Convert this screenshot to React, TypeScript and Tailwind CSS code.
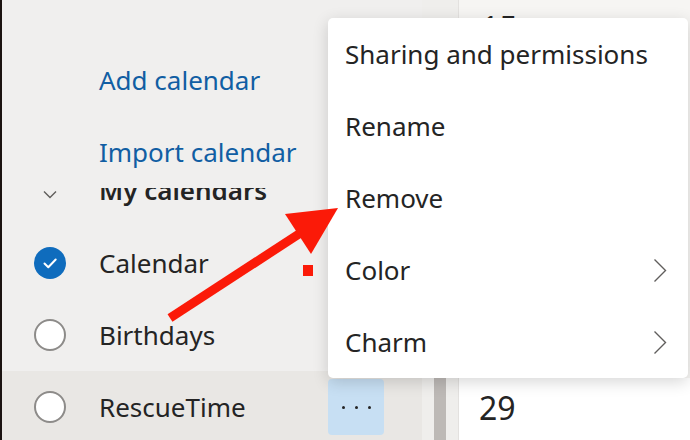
import React from "react";

interface CalendarRow {
  label: string;
  checked: boolean;
  active?: boolean;
}

const calendars: CalendarRow[] = [
  { label: "Calendar", checked: true },
  { label: "Birthdays", checked: false },
  { label: "RescueTime", checked: false, active: true },
];

interface MenuItem {
  label: string;
  submenu?: boolean;
}

const menuItems: MenuItem[] = [
  { label: "Sharing and permissions" },
  { label: "Rename" },
  { label: "Remove" },
  { label: "Color", submenu: true },
  { label: "Charm", submenu: true },
];

function CheckCircle({ checked }: { checked: boolean }) {
  if (checked) {
    return (
      <span className="w-8 h-8 rounded-full bg-[#0f6cbd] flex items-center justify-center shrink-0">
        <svg width="32" height="32" viewBox="0 0 32 32" fill="none">
          <path d="M10.5 16.5l3.8 3.8 7.4-7.8" stroke="#fff" strokeWidth="2" strokeLinecap="round" strokeLinejoin="round" />
        </svg>
      </span>
    );
  }
  return <span className="w-8 h-8 rounded-full border-2 border-[#8d8b89] bg-white shrink-0" />;
}

export default function App() {
  return (
    <div className="relative w-[690px] h-[440px] flex overflow-hidden bg-white font-['Noto_Sans',sans-serif] text-[26px] text-[#242424]">
      {/* window edge */}
      <div className="w-[2px] bg-[#1b1311] shrink-0" />

      {/* Left pane: calendar list */}
      <aside className="w-[420px] shrink-0 bg-[#f0efee] pt-[44px]">
        <div className="h-[72px] flex items-center pl-[97px] text-[#115ea3] leading-[36px]">Add calendar</div>
        <div className="relative z-10 h-[72px] flex items-center pl-[97px] text-[#115ea3] leading-[36px] bg-[#f0efee]">
          Import calendar
        </div>
        {/* section header, partly scrolled under the row above */}
        <div className="h-[39px] overflow-hidden flex items-start">
          <svg className="ml-[41px] mt-[2px] shrink-0" width="14" height="9" viewBox="0 0 14 9" fill="none">
            <path d="M1 1.5l6 6 6-6" stroke="#605e5c" strokeWidth="1.4" />
          </svg>
          <span className="ml-[42px] -mt-[16px] leading-[36px] font-semibold whitespace-nowrap">My calendars</span>
        </div>
        {calendars.map((cal) => (
          <div
            key={cal.label}
            className={`h-[72px] flex items-center pl-[32px] pr-[38px] leading-[36px] ${cal.active ? "bg-[#e9e7e4]" : ""}`}
          >
            <CheckCircle checked={cal.checked} />
            <span className="ml-[33px]">{cal.label}</span>
            {cal.active && (
              <button className="ml-auto w-[56px] h-[56px] rounded-[4px] bg-[#c7dff3] flex items-center justify-center gap-[10px]">
                <span className="w-[3px] h-[3px] rounded-full bg-[#242424]" />
                <span className="w-[3px] h-[3px] rounded-full bg-[#242424]" />
                <span className="w-[3px] h-[3px] rounded-full bg-[#242424]" />
              </button>
            )}
          </div>
        ))}
      </aside>

      {/* scrollbar gutter */}
      <div className="w-[36px] shrink-0 bg-[#efeeec] pl-[12px]">
        <div className="w-[12px] h-full mt-[200px] bg-[#bdb9b6]" />
      </div>
      <div className="w-px shrink-0 bg-[#e3e1df]" />

      {/* Calendar grid */}
      <main className="flex-1 flex flex-col">
        <div className="h-[378px] bg-[#f6f5f3] pl-[22px] pt-[8px] text-[32px] leading-[40px]">15</div>
        <div className="flex-1 bg-white pl-[20px] pt-[10px] text-[32px] leading-[40px]">29</div>
      </main>

      {/* Context menu */}
      <div className="absolute z-20 left-[328px] top-[18px] w-[360px] bg-white rounded-[5px] shadow-[0_4px_16px_rgba(0,0,0,0.16)]">
        {menuItems.map((item) => (
          <div key={item.label} className="h-[72px] flex items-center justify-between pl-[17px] pr-[21px] leading-[36px]">
            <span className="whitespace-nowrap">{item.label}</span>
            {item.submenu && (
              <svg width="14" height="25" viewBox="0 0 14 25" fill="none">
                <path d="M1.5 1.5l11 11-11 11" stroke="#605e5c" strokeWidth="1.4" />
              </svg>
            )}
          </div>
        ))}
      </div>

      {/* Annotation arrow */}
      <svg className="absolute z-30 inset-0 pointer-events-none" width="690" height="440" viewBox="0 0 690 440">
        <line x1="170" y1="318" x2="302" y2="232" stroke="#fb1a08" strokeWidth="9" />
        <polygon points="338,208 285,214 311,254" fill="#fb1a08" />
        <rect x="303" y="265" width="10" height="11" fill="#fb1a08" />
      </svg>
    </div>
  );
}
